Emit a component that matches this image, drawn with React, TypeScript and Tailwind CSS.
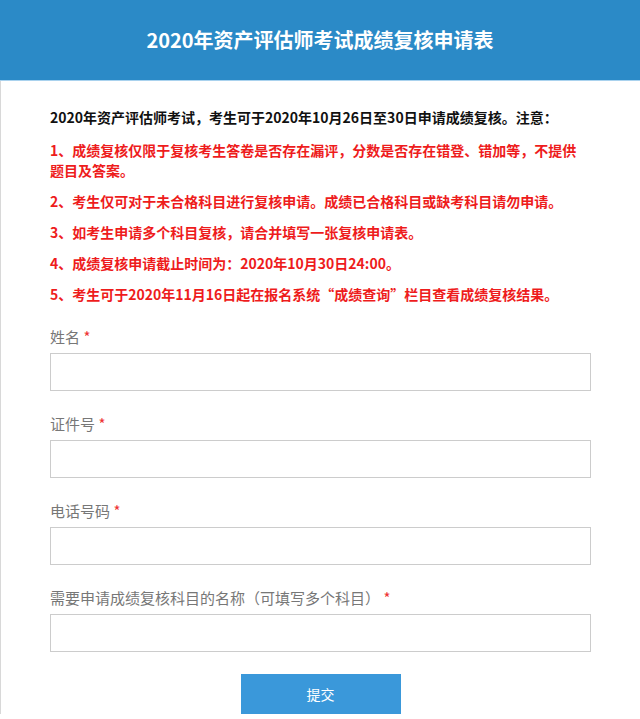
const font = { fontFamily: '"Microsoft YaHei", "Noto Sans CJK SC", "Liberation Sans", sans-serif' }

const notes = [
  '1、成绩复核仅限于复核考生答卷是否存在漏评，分数是否存在错登、错加等，不提供题目及答案。',
  '2、考生仅可对于未合格科目进行复核申请。成绩已合格科目或缺考科目请勿申请。',
  '3、如考生申请多个科目复核，请合并填写一张复核申请表。',
  '4、成绩复核申请截止时间为：2020年10月30日24:00。',
  '5、考生可于2020年11月16日起在报名系统“成绩查询”栏目查看成绩复核结果。',
]

const fields = ['姓名', '证件号', '电话号码', '需要申请成绩复核科目的名称（可填写多个科目）']

export default function App() {
  return (
    <div className="w-[640px] min-h-[719px] bg-white" style={font}>
      <div className="h-[81px] bg-[#2b8ac7] border-b border-[#a9d2ee] flex items-center justify-center">
        <h1 className="text-white text-[20px] font-bold leading-none">2020年资产评估师考试成绩复核申请表</h1>
      </div>

      <div className="border-l border-[#d8d8d8] pl-[49px] pr-[50px] pt-[26px]">
        <p className="text-[14px] font-bold text-[#111] leading-[20px] mb-[13px]">
          2020年资产评估师考试，考生可于2020年10月26日至30日申请成绩复核。注意：
        </p>
        {notes.map(n => (
          <p key={n} className="text-[14px] font-bold text-[#ee1c1c] leading-[20px] mb-[11px]">{n}</p>
        ))}

        <div className="pt-[12px]">
          {fields.map(f => (
            <div key={f} className="mb-[23px]">
              <label className="block text-[15px] text-[#777] leading-[20px] mb-[6px]">
                {f} <span className="text-[#e33]">*</span>
              </label>
              <input className="block w-[541px] h-[38px] border border-[#ccc] bg-white outline-none px-2" />
            </div>
          ))}
        </div>

        <div className="flex justify-center -mt-[1px]">
          <button className="w-[160px] h-[40px] bg-[#3a98da] text-white text-[14px] ml-[1px]">提交</button>
        </div>
      </div>
    </div>
  )
}
